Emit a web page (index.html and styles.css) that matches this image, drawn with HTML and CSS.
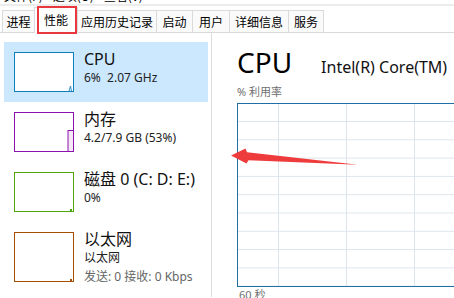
FILE: index.html
```html
<!DOCTYPE html>
<html lang="zh-CN">
<head>
<meta charset="utf-8">
<link rel="stylesheet" href="styles.css">
</head>
<body>
<div class="app">
  <div class="menubar"><span>文件(F)</span><span>选项(O)</span><span>查看(V)</span></div>
  <div class="tabs">
    <div class="tab t1">进程</div>
    <div class="tab t2 active">性能</div>
    <div class="tab t3">应用历史记录</div>
    <div class="tab t4">启动</div>
    <div class="tab t5">用户</div>
    <div class="tab t6">详细信息</div>
    <div class="tab t7">服务</div>
    <div class="tab-rest"></div>
    <div class="redbox"></div>
  </div>
  <div class="main">
    <aside class="side">
      <div class="item selected">
        <svg class="thumb" width="60" height="40" viewBox="0 0 60 40">
          <rect x="0.5" y="0.5" width="59" height="39" fill="#fff" stroke="#117dbb"/>
          <polyline points="55,39 56.5,34 57.5,39" fill="#d9ecf7" stroke="#117dbb" stroke-width="0.8"/>
        </svg>
        <div class="info">
          <div class="title">CPU</div>
          <div class="sub">6%&nbsp; 2.07 GHz</div>
        </div>
      </div>
      <div class="item">
        <svg class="thumb" width="60" height="40" viewBox="0 0 60 40">
          <rect x="0.5" y="0.5" width="59" height="39" fill="#fff" stroke="#8b12ae"/>
          <rect x="54" y="18.5" width="5.5" height="21" fill="#f4e8f7" stroke="#8b12ae" stroke-width="1"/>
        </svg>
        <div class="info">
          <div class="title">内存</div>
          <div class="sub">4.2/7.9 GB (53%)</div>
        </div>
      </div>
      <div class="item">
        <svg class="thumb" width="60" height="40" viewBox="0 0 60 40">
          <rect x="0.5" y="0.5" width="59" height="39" fill="#fff" stroke="#4da60c"/>
          <rect x="56" y="37" width="2" height="2" fill="#4da60c"/>
        </svg>
        <div class="info">
          <div class="title">磁盘 0 (C: D: E:)</div>
          <div class="sub">0%</div>
        </div>
      </div>
      <div class="item tall">
        <svg class="thumb" width="60" height="50" viewBox="0 0 60 50">
          <rect x="0.5" y="0.5" width="59" height="49" fill="#fff" stroke="#a74f01"/>
          <rect x="56" y="47" width="2" height="2" fill="#a74f01"/>
        </svg>
        <div class="info">
          <div class="title">以太网</div>
          <div class="sub">以太网</div>
          <div class="sub muted">发送: 0 接收: 0 Kbps</div>
        </div>
      </div>
    </aside>
    <section class="detail">
      <div class="head">
        <div class="big">CPU</div>
        <div class="model">Intel(R) Core(TM)</div>
      </div>
      <div class="label">% 利用率</div>
      <div class="chart"></div>
      <div class="label foot">60 秒</div>
    </section>
  </div>
  <svg class="arrow" width="454" height="298" viewBox="0 0 454 298">
    <polygon points="231,155.5 245.5,148.5 247,152.3 358,164.8 248.5,160.2 246.5,163.5" fill="#ee3b3b"/>
  </svg>
</div>
</body>
</html>
```

FILE: styles.css
```css
* { box-sizing: border-box; }
html, body { margin: 0; padding: 0; background: #fff; }
body {
  width: 454px;
  height: 298px;
  overflow: hidden;
  font-family: "Noto Sans", "Noto Sans CJK SC", sans-serif;
  color: #000;
}
.app { position: relative; width: 454px; height: 298px; overflow: hidden; }

.menubar {
  height: 6px;
  overflow: hidden;
  background: #fff;
  border-bottom: 2px solid #ececec;
  font-family: "Noto Sans CJK SC", sans-serif;
  font-size: 12px;
  line-height: 12px;
  display: flex;
  gap: 10px;
  padding-left: 4px;
}
.menubar span { margin-top: -10px; display: block; }

.tabs {
  position: relative;
  display: flex;
  align-items: flex-end;
  height: 27px;
  padding-left: 2px;
  border-bottom: 1px solid #d9d9d9;
  font-family: "Noto Sans CJK SC", sans-serif;
  font-size: 12px;
}
.tab {
  height: 22px;
  line-height: 21px;
  text-align: center;
  background: #fafafa;
  border: 1px solid #dadada;
  border-bottom: none;
  margin-right: -1px;
  color: #000;
}
.tab.active {
  line-height: 24px;
  background: #fff;
  margin-bottom: -1px;
  height: 26px;
  position: relative;
  z-index: 1;
}
.t1 { width: 33px; }
.t2 { width: 44px; }
.t3 { width: 80px; }
.t4 { width: 37px; }
.t5 { width: 38px; }
.t6 { width: 60px; }
.t7 { width: 36px; }
.tab-rest { flex: 1; }
.redbox {
  position: absolute;
  left: 37px;
  top: 0px;
  width: 40px;
  height: 28px;
  border: 2px solid #e8383d;
  z-index: 2;
}

.main { display: flex; height: 264px; }
.side {
  width: 212px;
  border-right: 1px solid #dcdcdc;
  padding: 9px 0 0 4px;
  flex-shrink: 0;
}
.item {
  width: 204px;
  height: 60px;
  display: flex;
  align-items: flex-start;
  padding: 10px 0 0 10px;
  gap: 10px;
}
.item.tall { height: 70px; }
.item.selected { background: #cce8ff; }
.thumb { display: block; flex-shrink: 0; }
.title {
  font-size: 16px;
  line-height: 18px;
  margin-top: -2px;
  color: #111;
  white-space: nowrap;
}
.sub {
  font-size: 12px;
  line-height: 16px;
  margin-top: 2px;
  color: #222;
  white-space: nowrap;
}
.item.tall .title { margin-bottom: 2px; }
.item.tall .sub { margin-top: 0; }
.item.tall .sub.muted { color: #666; margin-top: 3px; }

.detail {
  flex: 1;
  padding: 11px 0 0 25px;
  min-width: 0;
}
.head { display: flex; align-items: baseline; gap: 29px; white-space: nowrap; }
.big {
  font-size: 28px;
  line-height: 36px;
  color: #000;
}
.model { font-size: 16px; color: #111; }
.label {
  font-size: 11px;
  line-height: 14px;
  color: #707070;
  margin-top: 5px;
}
.chart {
  margin-top: 4px;
  width: 240px;
  height: 184px;
  border: 1.5px solid #1f6fa3;
  background-color: #fff;
  background-image:
    linear-gradient(#dde5ec 1px, transparent 1px),
    linear-gradient(90deg, #dde5ec 1px, transparent 1px);
  background-size: 100% 18.3px, 68px 100%;
  background-position: 0 17px, 40px 0;
}
.foot { margin-top: 1px; padding-left: 2px; }

.arrow { position: absolute; left: 0; top: 0; pointer-events: none; }
```
